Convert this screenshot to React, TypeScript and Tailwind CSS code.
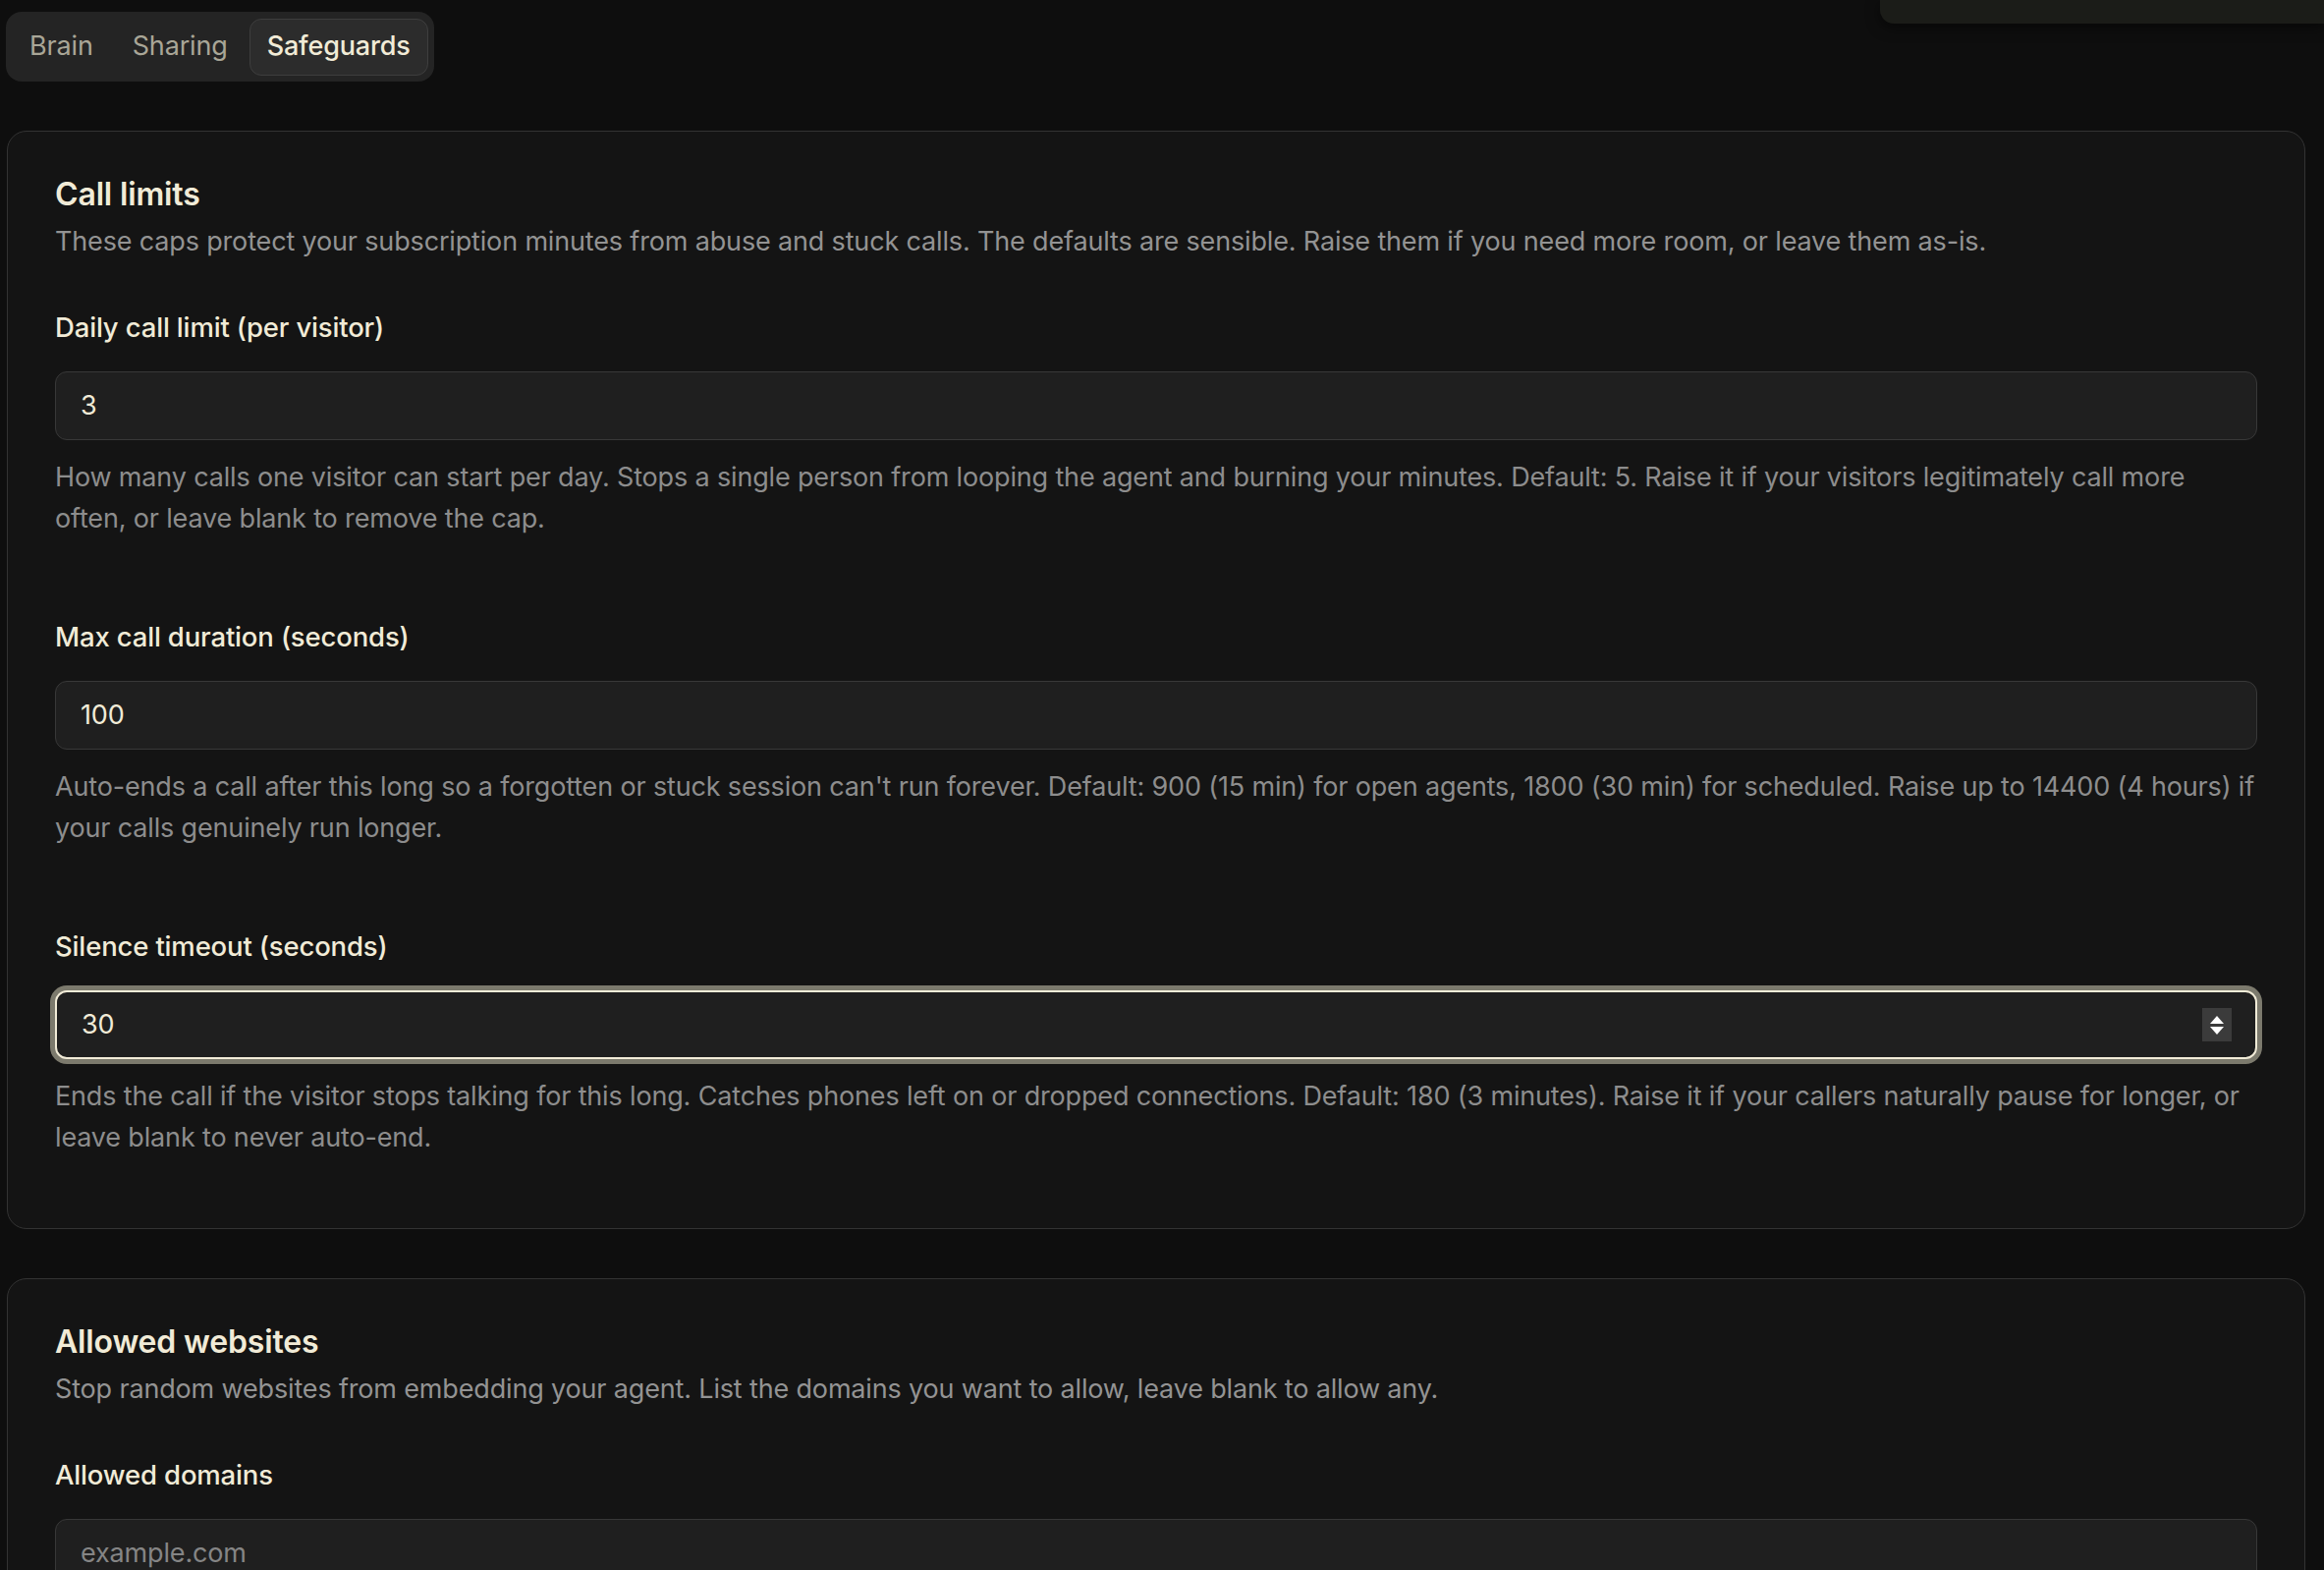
import { useState } from "react";

type Field = {
  label: string;
  value: string;
  placeholder?: string;
  help?: string;
  focused?: boolean;
};

const callFields: Field[] = [
  {
    label: "Daily call limit (per visitor)",
    value: "3",
    help: "How many calls one visitor can start per day. Stops a single person from looping the agent and burning your minutes. Default: 5. Raise it if your visitors legitimately call more often, or leave blank to remove the cap.",
  },
  {
    label: "Max call duration (seconds)",
    value: "100",
    help: "Auto-ends a call after this long so a forgotten or stuck session can't run forever. Default: 900 (15 min) for open agents, 1800 (30 min) for scheduled. Raise up to 14400 (4 hours) if your calls genuinely run longer.",
  },
  {
    label: "Silence timeout (seconds)",
    value: "30",
    focused: true,
    help: "Ends the call if the visitor stops talking for this long. Catches phones left on or dropped connections. Default: 180 (3 minutes). Raise it if your callers naturally pause for longer, or leave blank to never auto-end.",
  },
];

const Spinner = () => (
  <div className="flex h-[34px] w-[30px] flex-col items-center justify-center gap-[3px] bg-[#3b3b3b]">
    <svg width="14" height="8" viewBox="0 0 14 8">
      <path d="M7 0L14 8H0z" fill="#ffffff" />
    </svg>
    <svg width="14" height="8" viewBox="0 0 14 8">
      <path d="M0 0H14L7 8z" fill="#ffffff" />
    </svg>
  </div>
);

const FieldRow = ({ field }: { field: Field }) => {
  const [value, setValue] = useState(field.value);
  return (
    <div className="flex flex-col">
      <label className="text-[27.5px] leading-[36px] font-medium text-[#f1ebd7]">
        {field.label}
      </label>
      <div
        className={
          field.focused
            ? "mt-[27px] flex h-[70px] items-center rounded-[12px] border-2 border-[#f1ebd7] bg-[#1f1f1f] pl-[25px] pr-[24px] ring-[5px] ring-[#7c7a6d]"
            : "mt-[27px] flex h-[70px] items-center rounded-[12px] border-[1.5px] border-[#383838] bg-[#1f1f1f] pl-[25px] pr-[24px]"
        }
      >
        <input
          value={value}
          placeholder={field.placeholder}
          onChange={(e) => setValue(e.target.value)}
          className="flex-1 bg-transparent text-[27px] text-[#f1ebd7] outline-none placeholder:text-[#858585]"
        />
        {field.focused && <Spinner />}
      </div>
      {field.help && (
        <p className="mt-[17px] text-[27px] leading-[42px] text-[#8d8d8d]">
          {field.help}
        </p>
      )}
    </div>
  );
};

const Card = ({
  title,
  subtitle,
  fields,
}: {
  title: string;
  subtitle: string;
  fields: Field[];
}) => (
  <section className="rounded-[20px] border-[1.5px] border-[#333333] bg-[#141414] px-[48px] pt-[44px] pb-[71px]">
    <h2 className="text-[32px] leading-[40px] font-semibold text-[#f1ebd7]">
      {title}
    </h2>
    <p className="mt-[7px] text-[27px] leading-[42px] text-[#939393]">
      {subtitle}
    </p>
    <div className="mt-[48px] flex flex-col gap-[81px]">
      {fields.map((f) => (
        <FieldRow key={f.label} field={f} />
      ))}
    </div>
  </section>
);

export default function App() {
  const [tab, setTab] = useState("Safeguards");
  const tabs = ["Brain", "Sharing", "Safeguards"];

  return (
    <div className="relative min-h-screen bg-[#0e0e0e] pt-[12px] pr-[19px] pl-[7px] font-['Inter',sans-serif] tracking-[-0.01em]">
      <div className="absolute top-0 right-0 h-[24px] w-[452px] rounded-bl-[14px] bg-[#1b1c18] shadow-[0_4px_14px_rgba(0,0,0,0.5)]" />

      <div className="ml-[-1px] inline-flex h-[71px] items-center gap-[4px] rounded-[16px] bg-[#242424] px-[6px]">
        {tabs.map((t) => (
          <button
            key={t}
            onClick={() => setTab(t)}
            className={
              t === tab
                ? "h-[58px] rounded-[12px] border-[1.5px] border-[#3e3e3e] bg-[#2c2c2c] px-[17px] text-[27px] font-medium text-[#f1ebd7]"
                : "h-[58px] rounded-[12px] border-[1.5px] border-transparent px-[17px] text-[27px] text-[#a9a697]"
            }
          >
            {t}
          </button>
        ))}
      </div>

      <div className="mt-[50px] flex flex-col gap-[50px]">
        <Card
          title="Call limits"
          subtitle="These caps protect your subscription minutes from abuse and stuck calls. The defaults are sensible. Raise them if you need more room, or leave them as-is."
          fields={callFields}
        />
        <Card
          title="Allowed websites"
          subtitle="Stop random websites from embedding your agent. List the domains you want to allow, leave blank to allow any."
          fields={[
            { label: "Allowed domains", value: "", placeholder: "example.com" },
          ]}
        />
      </div>
    </div>
  );
}
